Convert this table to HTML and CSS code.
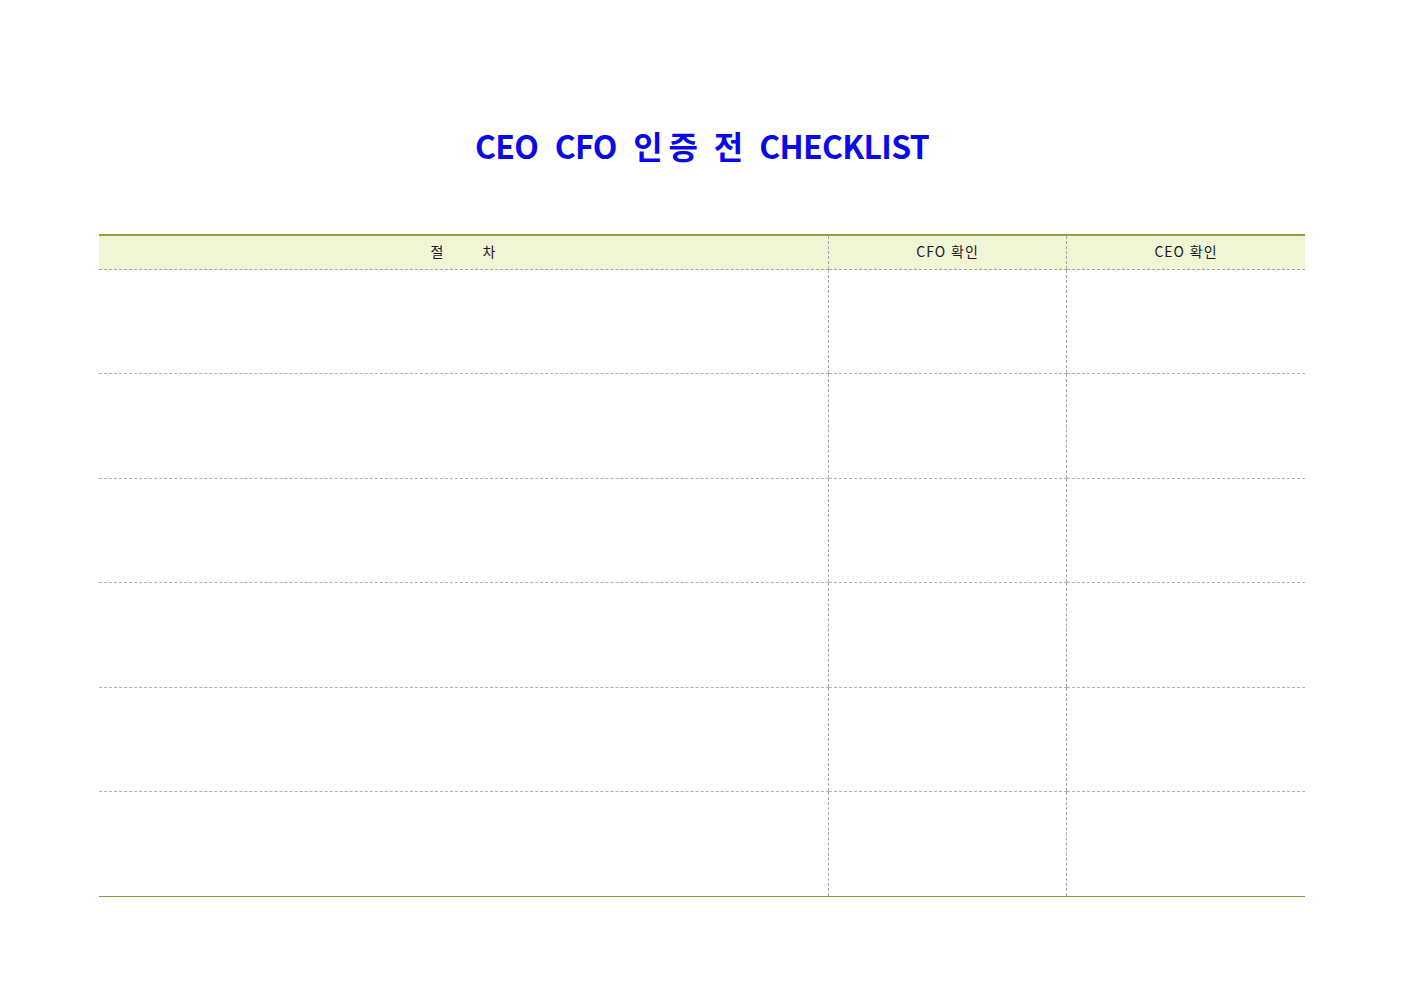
FILE: index.html
```html
<!DOCTYPE html>
<html lang="ko">
<head>
    <meta charset="UTF-8">
    <meta name="viewport" content="width=device-width, initial-scale=1.0">
    <title>CEO CFO 인증 전 CHECKLIST</title>
    <link rel="stylesheet" href="styles.css">
</head>
<body>
    <div class="page">
        <h1 class="title">CEO&nbsp; CFO&nbsp; <span class="wide">인</span>증&nbsp; 전&nbsp; CHECKLIST</h1>
        <div class="table-wrap">
            <table class="checklist">
                <thead>
                    <tr>
                        <th class="col-step">절<span class="gap"></span>차</th>
                        <th class="col-cfo">CFO&nbsp;확인</th>
                        <th>CEO&nbsp;확인</th>
                    </tr>
                </thead>
                <tbody>
                    <tr class="short"><td></td><td></td><td></td></tr>
                    <tr><td></td><td></td><td></td></tr>
                    <tr class="short"><td></td><td></td><td></td></tr>
                    <tr><td></td><td></td><td></td></tr>
                    <tr class="short"><td></td><td></td><td></td></tr>
                    <tr class="last"><td></td><td></td><td></td></tr>
                </tbody>
            </table>
        </div>
    </div>
</body>
</html>
```

FILE: styles.css
```css
body {
    margin: 0;
    background: #ffffff;
    font-family: "Noto Sans CJK KR", "Noto Sans", sans-serif;
}
.page {
    padding: 124px 98px 0 99px;
}
.title {
    margin: 0 0 68px;
    text-align: center;
    font-size: 32px;
    line-height: 42px;
    font-weight: bold;
    color: #0a0ae8;
    letter-spacing: -0.7px;
}
.title .wide {
    letter-spacing: 6px;
}
.table-wrap {
    width: 1206px;
    border-bottom: 1px solid #869a3a;
}
.checklist {
    width: 1206px;
    border-collapse: collapse;
    table-layout: fixed;
}
.col-step {
    width: 729px;
}
.col-cfo {
    width: 237px;
}
th {
    height: 30px;
    padding: 0 0 3px;
    background: #eff5d5;
    border-top: 2px solid #8ea838;
    border-bottom: 1px dashed #a5a5a5;
    font-size: 14px;
    font-weight: normal;
    letter-spacing: 1px;
    color: #1a1a1a;
}
th + th, td + td {
    border-left: 1px dashed #a5a5a5;
}
.gap {
    display: inline-block;
    width: 38px;
}
td {
    height: 104px;
    padding: 0;
    border-bottom: 1px dashed #b0b0b0;
}
.short td {
    height: 103px;
}
.last td {
    border-bottom: none;
}
```
